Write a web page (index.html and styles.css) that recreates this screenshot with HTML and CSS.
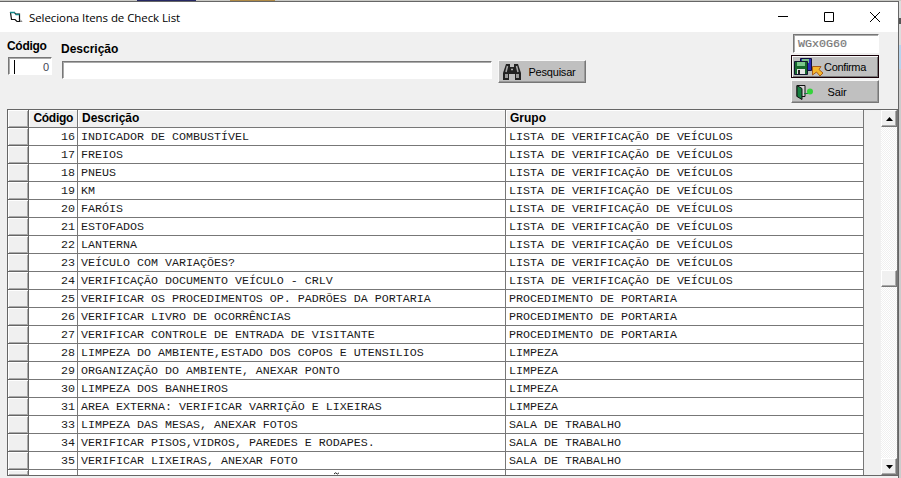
FILE: index.html
```
<!DOCTYPE html>
<html lang="pt-BR">
<head>
<meta charset="utf-8">
<title>Seleciona Itens de Check List</title>
<link rel="stylesheet" href="styles.css">
</head>
<body>
<div class="desktop">
<div class="peek-top"><i class="blob b1"></i><i class="blob b2"></i><i class="blob b3"></i><i class="blob b4"></i><i class="blob b5"></i></div>
<main class="window">
<header class="titlebar">
<svg class="app-icon" width="14" height="14" viewBox="0 0 14 14"><path d="M1.500 2.500h4l1 1.500h4v7.500H8l-2-2H2.500z" fill="#fff" stroke="#111" stroke-width="1.200"/><path d="M1 2.500h5M6.500 4.500h4" stroke="#138a8a" stroke-width="1.500"/><path d="M11 9.500l2 2h-2" fill="none" stroke="#888"/></svg>
<h1>Seleciona Itens de Check List</h1>
<div class="controls">
<svg width="10" height="10" viewBox="0 0 10 10"><path d="M0 4.500h10" stroke="#000"/></svg>
<svg width="10" height="10" viewBox="0 0 10 10"><path d="M.5.500h9v9h-9z" fill="none" stroke="#000"/></svg>
<svg width="10" height="10" viewBox="0 0 10 10"><path d="M0 0l10 10M10 0L0 10" stroke="#000"/></svg>
</div>
</header>
<section class="form">
<label class="code-field"><span>Código</span><span class="input code"><i class="caret"></i>0</span></label>
<label class="desc-field"><span>Descrição</span><span class="input desc"></span></label>
<button class="btn search"><svg width="20" height="18" viewBox="0 0 20 18"><path d="M4 1h4v3h4V1h4l3 9v7h-6v-6H7v6H1v-7z" fill="#222"/><path d="M5.500 3L4 9M14.500 3L16 9M9 6.500h2" stroke="#aaa" stroke-width="1.500"/><path d="M3 11h3v4H3zM14 11h3v4h-3z" fill="#999"/></svg><span>Pesquisar</span></button>
<div class="actions">
<div class="input token">WGx0G60</div>
<button class="btn confirm"><svg width="30" height="20" viewBox="0 0 30 20"><path d="M7.500 1.500h11v12h-11z" fill="#2929b8" stroke="#101040"/><path d="M9 2h7v4H9z" fill="#79bd8b"/><path d="M1.500 4.500h13v13h-13z" fill="#17672c" stroke="#101830"/><path d="M4 5h8v4H4z" fill="#7bc78a"/><path d="M4 12h8v5H4z" fill="#e5e5e5"/><path d="M5 13h2v4H5z" fill="#222"/><path d="M19.500 9.500h8.500l-2 3 4 3.500-3 3-3.500-4-4 3z" fill="#f5b72c" stroke="#a85b18"/></svg><span>Confirma</span></button>
<button class="btn exit"><svg width="20" height="18" viewBox="0 0 20 18"><path d="M2 2.500h8v11H2z" fill="#d5d5d5" stroke="#111"/><path d="M2 2.500l5 3v11l-5-3z" fill="#168040" stroke="#111"/><path d="M9 10.500h4" stroke="#158040"/><circle cx="15" cy="8.500" r="3" fill="#35d33b"/></svg><span>Sair</span></button>
</div>
</section>
<section class="grid">
<div class="table">
<div class="row head"><b></b><b>Código</b><b>Descrição</b><b>Grupo</b></div>
<div class="row"><i></i><span>16</span><span>INDICADOR DE COMBUSTÍVEL</span><span>LISTA DE VERIFICAÇÃO DE VEÍCULOS</span></div>
<div class="row"><i></i><span>17</span><span>FREIOS</span><span>LISTA DE VERIFICAÇÃO DE VEÍCULOS</span></div>
<div class="row"><i></i><span>18</span><span>PNEUS</span><span>LISTA DE VERIFICAÇÃO DE VEÍCULOS</span></div>
<div class="row"><i></i><span>19</span><span>KM</span><span>LISTA DE VERIFICAÇÃO DE VEÍCULOS</span></div>
<div class="row"><i></i><span>20</span><span>FARÓIS</span><span>LISTA DE VERIFICAÇÃO DE VEÍCULOS</span></div>
<div class="row"><i></i><span>21</span><span>ESTOFADOS</span><span>LISTA DE VERIFICAÇÃO DE VEÍCULOS</span></div>
<div class="row"><i></i><span>22</span><span>LANTERNA</span><span>LISTA DE VERIFICAÇÃO DE VEÍCULOS</span></div>
<div class="row"><i></i><span>23</span><span>VEÍCULO COM VARIAÇÕES?</span><span>LISTA DE VERIFICAÇÃO DE VEÍCULOS</span></div>
<div class="row"><i></i><span>24</span><span>VERIFICAÇÃO DOCUMENTO VEÍCULO - CRLV</span><span>LISTA DE VERIFICAÇÃO DE VEÍCULOS</span></div>
<div class="row"><i></i><span>25</span><span>VERIFICAR OS PROCEDIMENTOS OP. PADRÕES DA PORTARIA</span><span>PROCEDIMENTO DE PORTARIA</span></div>
<div class="row"><i></i><span>26</span><span>VERIFICAR LIVRO DE OCORRÊNCIAS</span><span>PROCEDIMENTO DE PORTARIA</span></div>
<div class="row"><i></i><span>27</span><span>VERIFICAR CONTROLE DE ENTRADA DE VISITANTE</span><span>PROCEDIMENTO DE PORTARIA</span></div>
<div class="row"><i></i><span>28</span><span>LIMPEZA DO AMBIENTE,ESTADO DOS COPOS E UTENSILIOS</span><span>LIMPEZA</span></div>
<div class="row"><i></i><span>29</span><span>ORGANIZAÇÃO DO AMBIENTE, ANEXAR PONTO</span><span>LIMPEZA</span></div>
<div class="row"><i></i><span>30</span><span>LIMPEZA DOS BANHEIROS</span><span>LIMPEZA</span></div>
<div class="row"><i></i><span>31</span><span>AREA EXTERNA: VERIFICAR VARRIÇÃO E LIXEIRAS</span><span>LIMPEZA</span></div>
<div class="row"><i></i><span>33</span><span>LIMPEZA DAS MESAS, ANEXAR FOTOS</span><span>SALA DE TRABALHO</span></div>
<div class="row"><i></i><span>34</span><span>VERIFICAR PISOS,VIDROS, PAREDES E RODAPES.</span><span>SALA DE TRABALHO</span></div>
<div class="row"><i></i><span>35</span><span>VERIFICAR LIXEIRAS, ANEXAR FOTO</span><span>SALA DE TRABALHO</span></div>
<div class="row partial"><i></i><span></span><span><svg class="tilde" width="5" height="3" viewBox="0 0 5 3"><path d="M0 2L1.500.8 3.500 2 5 .8" fill="none" stroke="#222"/></svg></span><span></span></div>
</div>
<div class="scrollbar">
<div class="sb-btn"><svg width="7" height="4" viewBox="0 0 7 4"><path d="M0 4L3.500 0 7 4z"/></svg></div>
<div class="track upper"></div><div class="sb-btn thumb"></div><div class="track lower"></div>
<div class="sb-btn"><svg width="7" height="4" viewBox="0 0 7 4"><path d="M0 0h7L3.500 4z"/></svg></div>
</div>
</section>
</main>
<aside class="peek-right"></aside>
</div>
</body>
</html>
```
FILE: styles.css
```
* { box-sizing: border-box; }
body { margin: 0; overflow: hidden; font-family: "Liberation Sans", Arial, sans-serif; color: #000; }
.desktop { width: 901px; height: 478px; display: grid; grid-template: 1px 477px / 899px 2px; background: #d5d5d5; }
.peek-top { grid-column: 1 / 3; display: flex; background: #c9c9c5; }
.blob { height: 1px; }
.b1 { width: 137px; }
.b2 { width: 59px; background: #252763; }
.b3 { width: 34px; }
.b4 { width: 45px; background: #b08a45; }
.b5 { flex: 1; }
.window { display: flex; flex-direction: column; background: #f0f0f0; border-top: 1px solid #666; border-right: 1px solid #666; }
.titlebar { display: flex; align-items: center; height: 30px; padding: 0 18px 0 9px; background: #fff; }
.app-icon { margin-right: 6px; }
h1 { margin: 0; flex: 1; font: 11.5px "Open Sans", "Noto Sans", sans-serif; letter-spacing: -.08px; }
.controls { display: flex; gap: 36px; }
.form { display: flex; height: 77px; padding-left: 7px; align-items: flex-start; font-size: 12px; }
.form label { display: flex; flex-direction: column; font-weight: bold; line-height: 14px; }
.code-field > span:first-child { letter-spacing: -.3px; }
.input { display: block; background: #fff; border: 1px solid #fff; border-top-color: #777; border-left-color: #777; box-shadow: inset 1px 1px #aaa; }
.code-field { padding-top: 7px; width: 54px; }
.code { margin: 4px 0 0 1px; width: 44px; height: 18px; padding: 2px 2px 0 5px; display: flex; justify-content: space-between; font-size: 11px; font-weight: normal; color: #445; }
.caret { width: 1px; height: 14px; background: #000; }
.desc-field { padding-top: 10px; width: 437px; }
.desc { margin: 5px 0 0 1px; width: 430px; height: 18px; }
.btn { display: flex; align-items: center; height: 23px; padding: 0 3px; background: #c0c0c0; border: 1px solid; border-color: #f8f8f8 #777 #777 #f8f8f8; box-shadow: inset -1px -1px #999; font: 11px "Liberation Sans", Arial, sans-serif; color: #000; }
.btn span { flex: 1; text-align: center; letter-spacing: -.2px; }
.search { margin-top: 28px; width: 88px; }
.actions { margin-left: 205px; padding-top: 2px; width: 88px; }
.token { margin-left: 2px; width: 86px; height: 19px; padding: 2px 4px; font: 11.667px/15px "Liberation Mono", monospace; -webkit-text-stroke: .2px #777; color: #777; }
.confirm { margin-top: 2px; width: 88px; height: 23px; padding: 0 1px; border-color: #180008; box-shadow: inset 1px 1px #f8f8f8, inset -1px -1px #777; }
.confirm span { margin-left: -10px; letter-spacing: -.35px; }
.exit { margin-top: 2px; width: 88px; }
.exit span { margin-left: -16px; }
.grid { display: flex; width: 891px; height: 367px; margin-left: 7px; border: 1px solid #666; border-right: 0; overflow: hidden; }
.table { width: 856px; height: 365px; overflow: hidden; border-right: 1px solid #777; background: #fff; }
.row { display: grid; grid-template-columns: 21px 49px 428px 357px; height: 18px; font: 11.667px/19px "Liberation Mono", "Courier New", monospace; white-space: pre; color: #1a1a1a; }
.row > * { border-right: 1px solid #777; border-bottom: 1px solid #777; padding-left: 3px; overflow: hidden; }
.row > :last-child { border-right: 0; }
.row > :nth-child(2) { text-align: right; padding-right: 2px; }
.row > :first-child { background: #f0f0f0; border-color: #666; box-shadow: inset 1px 1px #fff, inset -1px -1px #aaa; }
.head { font: bold 12px/17px "Liberation Sans", Arial, sans-serif; color: #000; }
.head > * { background: #f0f0f0; box-shadow: inset 1px 1px #fff; padding-left: 4px; }
.head > :nth-child(2) { padding-right: 4px; letter-spacing: -.3px; }
.partial { height: 5px; }
.partial > * { border-bottom: 0; }
.tilde { display: block; margin: 2px 0 0 253px; }
.scrollbar { width: 17px; height: 365px; margin-left: 17px; display: flex; flex-direction: column; border-right: 1px solid #777; }
.sb-btn { flex: none; display: flex; align-items: center; justify-content: center; height: 17px; background: #f0f0f0; border: 1px solid; border-color: #fff #777 #777 #fff; box-shadow: inset -1px -1px #aaa; }
.track { background: repeating-conic-gradient(#fff 0 25%, #f0f0f0 0 50%) 0 0 / 2px 2px; }
.upper { height: 143px; }
.lower { flex: 1; }
.peek-right { background: linear-gradient(#ddd 0 17px, #555 17px 23px, #ddd 23px 44px, #b8d4ec 44px 68px, #ccc 68px); }
```
